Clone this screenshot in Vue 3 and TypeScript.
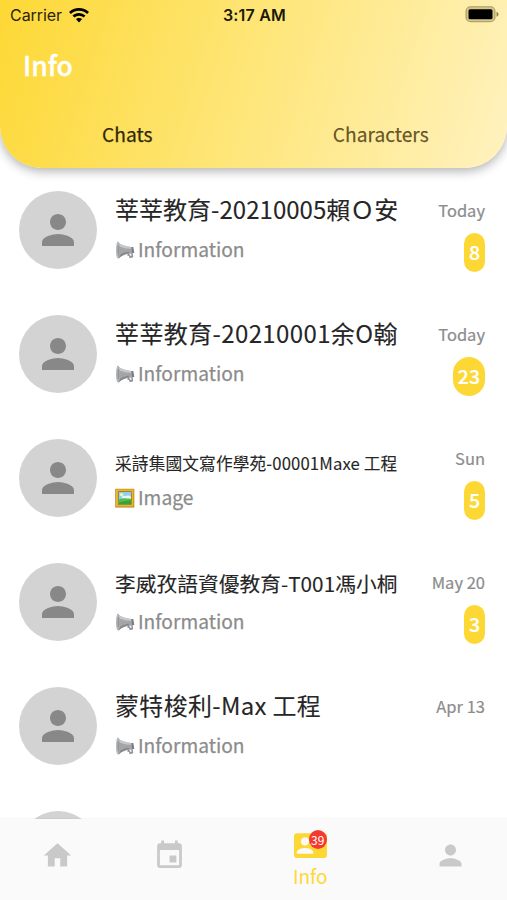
<script setup lang="ts">
import { ref } from 'vue'

interface Chat {
  id: number
  name: string
  size: number
  spacing: number
  kind: 'Information' | 'Image'
  date: string
  unread: number
}

const chats: Chat[] = [
  { id: 1, name: '莘莘教育-20210005賴Ｏ安', size: 24, spacing: 0.03, kind: 'Information', date: 'Today', unread: 8 },
  { id: 2, name: '莘莘教育-20210001余O翰', size: 24, spacing: 0.38, kind: 'Information', date: 'Today', unread: 23 },
  { id: 3, name: '采詩集國文寫作學苑-00001Maxe 工程', size: 16.7, spacing: 0.13, kind: 'Image', date: 'Sun', unread: 5 },
  { id: 4, name: '李威孜語資優教育-T001馮小桐', size: 20.7, spacing: 0.05, kind: 'Information', date: 'May 20', unread: 3 },
  { id: 5, name: '蒙特梭利-Max 工程', size: 24, spacing: 0.32, kind: 'Information', date: 'Apr 13', unread: 0 },
  { id: 6, name: '', size: 24, spacing: 0, kind: 'Information', date: '', unread: 0 },
]

const tabs = ['Chats', 'Characters']
const activeTab = ref('Chats')

const personPath =
  'M12 12c2.21 0 4-1.79 4-4s-1.79-4-4-4-4 1.79-4 4 1.79 4 4 4zm0 2c-2.67 0-8 1.34-8 4v2h16v-2c0-2.66-5.33-4-8-4z'
</script>

<template>
  <div class="screen">
    <header class="header">
      <div class="status">
        <div class="carrier">
          <span>Carrier</span>
          <svg class="wifi" viewBox="0 0 20 15">
            <path d="M10 0C6.200 0 2.700 1.500 0 4l1.900 2A11.900 11.900 0 0 1 10 2.800 11.900 11.900 0 0 1 18.100 6L20 4A14.700 14.700 0 0 0 10 0z" />
            <path d="M10 5c-2.500 0-4.800 1-6.500 2.600l1.900 2A6.700 6.700 0 0 1 10 7.700c1.800 0 3.400.7 4.600 1.900l1.900-2A9.400 9.400 0 0 0 10 5z" />
            <path d="M10 9.900c-1.200 0-2.300.5-3.100 1.200L10 14.600l3.100-3.500A4.600 4.600 0 0 0 10 9.900z" />
          </svg>
        </div>
        <span class="time">3:17 AM</span>
        <div class="power">
          <svg class="battery" viewBox="0 0 34 17">
            <rect x="1" y=".8" width="29" height="15" rx="4.500" fill="#7a6c3a" fill-opacity=".3" stroke="#7c703f" stroke-opacity=".6" stroke-width="1.100" />
            <rect x="3.500" y="3.300" width="24" height="10" rx="1.500" fill="#000" />
            <path d="M31.500 5.800c1.300.5 2 1.400 2 2.500s-.7 2-2 2.500z" fill="#8b8050" />
          </svg>
        </div>
      </div>
      <h1 class="title">Info</h1>
      <nav class="tabs">
        <button
          v-for="tab in tabs"
          :key="tab"
          class="tab"
          :class="{ active: tab === activeTab }"
          @click="activeTab = tab"
        >{{ tab }}</button>
      </nav>
    </header>

    <main class="list">
      <article v-for="chat in chats" :key="chat.id" class="row">
        <div class="avatar">
          <svg viewBox="0 0 24 24"><path :d="personPath" /></svg>
        </div>
        <div class="body">
          <div class="name" :style="{ fontSize: chat.size + 'px', letterSpacing: chat.spacing + 'px' }">{{ chat.name }}</div>
          <div class="preview">
            <svg v-if="chat.kind === 'Information'" class="emoji" viewBox="0 0 20 20">
              <path d="M13 12.500l4.500-.8.700 5.600-3.400 1-.9-2.300-1.700-.6z" fill="#8f939b" />
              <path d="M14.200 13.600l2-.4.400 2.500-1.400.4z" fill="#f4f4f6" />
              <path d="M2.200 1.600C6 5.300 11 6.900 17.500 7.200l1 5.800C12.300 13.500 7 15.200 3.400 18.600z" fill="#a3a5a7" />
              <path d="M2.200 1.600C6 5.300 11 6.900 17.500 7.200l.3 1.500C11 9.100 6 7.800 3 5.600z" fill="#c6c8c9" />
              <path d="M3.600 18.400c3.400-3.200 7-4.700 10.400-5.200l-.3-1.800C9.500 12 6 13.700 3.400 16.200z" fill="#85878b" />
              <ellipse cx="3" cy="10.200" rx="2" ry="8.500" fill="#b4b6b8" />
              <ellipse cx="3.500" cy="10.300" rx="1" ry="5.400" fill="#94969a" />
              <path d="M16.300 7l2-.1 1 6-2.200.2z" fill="#777c85" />
            </svg>
            <svg v-else class="emoji" viewBox="0 0 20 20">
              <rect x=".3" y=".8" width="19" height="18.700" fill="#b87a17" />
              <rect x="1" y="1.300" width="17.600" height="17.300" fill="#e9b52e" />
              <rect x="3" y="3.300" width="13.600" height="13.400" fill="#8a6a1c" />
              <rect x="3.700" y="4" width="12.300" height="12.200" fill="#8fd0f2" />
              <circle cx="6.600" cy="6.600" r="1.700" fill="#fdf3a0" />
              <path d="M7 9c1-1.700 3-1.500 3.700-.7 1.300-1.200 4-.7 5.300.6V11H6z" fill="#e8f6fc" />
              <path d="M3.700 11.200c3-1.400 6.300-.7 12.300-.4v5.400H3.700z" fill="#55bd45" />
              <path d="M3.700 14.800c4-2 8-1.800 12.300-2.600v4H3.700z" fill="#37a238" />
            </svg>
            <span v-if="chat.name" class="kind">{{ chat.kind }}</span>
          </div>
        </div>
        <div class="meta">
          <span class="date">{{ chat.date }}</span>
          <span v-if="chat.unread" class="badge">{{ chat.unread }}</span>
        </div>
      </article>
    </main>

    <footer class="bottom">
      <div class="item">
        <svg viewBox="0 0 24 24"><path d="M10 20v-6h4v6h5v-8h3L12 3 2 12h3v8z" /></svg>
      </div>
      <div class="item">
        <svg viewBox="0 0 24 24">
          <path d="M17 12h-5v5h5v-5zM16 1v2H8V1H6v2H5c-1.110 0-1.990.9-1.990 2L3 19c0 1.100.89 2 2 2h14c1.100 0 2-.9 2-2V5c0-1.100-.9-2-2-2h-1V1h-2zm3 18H5V8h14v11z" />
        </svg>
      </div>
      <div class="item selected">
        <div class="icon-wrap">
          <svg viewBox="0 0 24 24">
            <path d="M21 8V7l-3 2-3-2v1l3 2 3-2zm1-5H2C.9 3 0 3.900 0 5v14c0 1.100.9 2 2 2h20c1.100 0 1.990-.9 1.990-2L24 5c0-1.100-.9-2-2-2zM8 6c1.660 0 3 1.340 3 3s-1.340 3-3 3-3-1.340-3-3 1.340-3 3-3zm6 12H2v-1c0-2 4-3.100 6-3.100s6 1.100 6 3.100v1zm8-6h-8V6h8v6z" />
          </svg>
          <span class="count">39</span>
        </div>
        <span class="label">Info</span>
      </div>
      <div class="item">
        <svg viewBox="0 0 24 24"><path :d="personPath" /></svg>
      </div>
    </footer>
  </div>
</template>

<style>
body {
  margin: 0;
  background: #fff;
}
</style>

<style scoped>
.screen {
  width: 507px;
  height: 900px;
  display: flex;
  flex-direction: column;
  overflow: hidden;
  background: #fff;
  font-family: 'Noto Sans CJK TC', 'Noto Sans', sans-serif;
  font-weight: 400;
}
.header {
  flex: none;
  height: 168px;
  box-sizing: border-box;
  display: flex;
  flex-direction: column;
  border-radius: 0 0 42px 42px;
  background: linear-gradient(108deg, #fdd835 0%, #fee67a 50%, #fff2bf 100%);
  box-shadow: 0 3px 11px rgba(0, 0, 0, 0.32);
  position: relative;
  z-index: 1;
}
.status {
  height: 30px;
  display: grid;
  grid-template-columns: 1fr auto 1fr;
  align-items: center;
  padding: 0 8px 0 10px;
  font-family: Inter, sans-serif;
  color: #2b2410;
}
.carrier {
  display: flex;
  align-items: center;
  gap: 7px;
  font-size: 16px;
  font-weight: 400;
  letter-spacing: -0.05px;
}
.wifi {
  width: 20px;
  height: 15px;
  fill: #000;
}
.time {
  font-size: 16px;
  font-weight: 600;
  letter-spacing: 0.2px;
  color: #1c1808;
}
.power {
  display: flex;
  justify-content: flex-end;
}
.battery {
  width: 34px;
  height: 17px;
  margin-top: -2px;
}
.title {
  margin: 0;
  padding-left: 23px;
  height: 71px;
  line-height: 70px;
  font-size: 26.500px;
  font-weight: 500;
  color: #fff;
  -webkit-text-stroke: 0.35px #fff;
}
.tabs {
  height: 65px;
  display: grid;
  grid-template-columns: 1fr 1fr;
}
.tab {
  border: 0;
  padding: 0 0 0 1px;
  background: none;
  font: inherit;
  font-size: 19.200px;
  color: rgba(50, 35, 0, 0.74);
  -webkit-text-stroke: 0.25px currentColor;
}
.tab.active {
  color: #2f280c;
}
.list {
  flex: 1;
  min-height: 0;
  overflow: hidden;
}
.row {
  height: 124px;
  box-sizing: border-box;
  display: grid;
  grid-template-columns: 78px 296px minmax(0, 1fr);
  column-gap: 18px;
  padding: 23px 22px 0 19px;
}
.avatar {
  width: 78px;
  height: 78px;
  border-radius: 50%;
  background: #d3d3d3;
  display: flex;
  align-items: center;
  justify-content: center;
}
.avatar svg {
  width: 48px;
  height: 48px;
  fill: #888;
}
.body {
  display: flex;
  flex-direction: column;
}
.name {
  height: 36px;
  display: flex;
  align-items: flex-end;
  line-height: 1.448;
  white-space: pre;
  color: #262626;
  -webkit-text-stroke: 0.1px currentColor;
}
.preview {
  height: 46px;
  display: flex;
  align-items: center;
  gap: 3px;
  font-size: 19.200px;
  color: #8c8c8c;
}
.kind {
  line-height: 46px;
  margin-top: -3px;
  -webkit-text-stroke: 0.25px currentColor;
}
.emoji {
  width: 20px;
  height: 20px;
}
.meta {
  display: flex;
  flex-direction: column;
  align-items: flex-end;
}
.date {
  height: 42px;
  line-height: 38px;
  font-size: 16.500px;
  color: #8c8c8c;
  white-space: nowrap;
  -webkit-text-stroke: 0.2px currentColor;
}
.badge {
  height: 39px;
  line-height: 38px;
  box-sizing: border-box;
  padding: 0 5px;
  border-radius: 16px;
  background: #fdd835;
  color: #fff;
  font-size: 19.500px;
  font-weight: 500;
  -webkit-text-stroke: 0.2px #fff;
}
.bottom {
  flex: none;
  height: 81px;
  box-sizing: border-box;
  display: grid;
  grid-template-columns: 1fr 1fr 1.5fr 1fr;
  padding-left: 1px;
  background: #fafafa;
  box-shadow: 0 -1px 1px rgba(0, 0, 0, 0.03);
  position: relative;
}
.item {
  display: flex;
  flex-direction: column;
  align-items: center;
  padding-top: 20px;
}
.item svg {
  display: block;
  width: 33px;
  height: 33px;
  fill: #c9c9c9;
}
.item.selected {
  padding-top: 10px;
}
.item.selected svg {
  fill: #fdd835;
}
.icon-wrap {
  position: relative;
}
.count {
  position: absolute;
  left: 15px;
  top: 1px;
  width: 18px;
  height: 19px;
  border-radius: 50%;
  background: #f43a30;
  color: #fff;
  font-size: 12px;
  font-weight: 400;
  line-height: 19px;
  text-align: center;
}
.label {
  height: 28px;
  line-height: 28px;
  font-size: 19px;
  font-weight: 400;
  color: #fdd835;
}
</style>
